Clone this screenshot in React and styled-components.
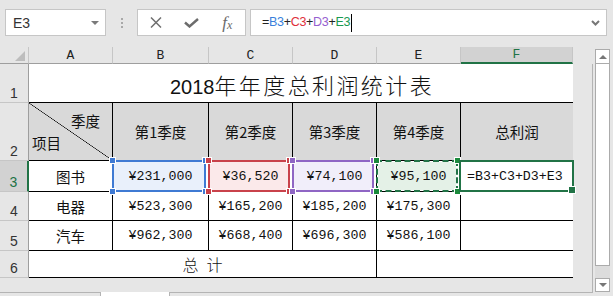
import React from "react";
import styled, { createGlobalStyle, css } from "styled-components";

const GlobalStyle = createGlobalStyle`
  html, body {
    margin: 0;
    padding: 0;
    background: #e6e6e6;
    overflow: hidden;
  }
`;

const CJK = `"Noto Sans CJK SC", "Liberation Sans", sans-serif`;
const MONO = `"Liberation Mono", "Noto Sans CJK SC", monospace`;
const GREEN = "#217346";

const Window = styled.div`
  width: 613px;
  height: 296px;
  background: #e6e6e6;
  display: flex;
  flex-direction: column;
  overflow: hidden;
`;

const FormulaBar = styled.div`
  height: 47px;
  box-sizing: border-box;
  padding: 9px 6px 11px 5px;
  display: flex;
  align-items: stretch;
`;

const NameBox = styled.div`
  width: 101px;
  box-sizing: border-box;
  background: #fff;
  border: 1px solid #c6c6c6;
  display: flex;
  align-items: center;
  justify-content: space-between;
  padding: 0 6px 0 7px;
  font-family: "Liberation Sans", sans-serif;
  font-size: 14px;
  color: #333;
`;

const DropTriangle = styled.span`
  width: 0;
  height: 0;
  border-left: 4px solid transparent;
  border-right: 4px solid transparent;
  border-top: 4px solid #7a7a7a;
`;

const Dots = styled.div`
  width: 31px;
  display: flex;
  flex-direction: column;
  align-items: center;
  justify-content: center;
  gap: 2px;
  span {
    width: 2px;
    height: 2px;
    background: #a8a8a8;
  }
`;

const ButtonGroup = styled.div`
  width: 109px;
  box-sizing: border-box;
  background: #fff;
  border: 1px solid #c6c6c6;
  display: flex;
  align-items: center;
`;

const BarButton = styled.div`
  width: 36px;
  display: flex;
  align-items: center;
  justify-content: center;
  color: #6e6e6e;
`;

const Fx = styled.span`
  font-family: "Liberation Serif", serif;
  font-style: italic;
  font-size: 17px;
  color: #6a6a6a;
  sub {
    font-size: 12px;
    vertical-align: -1px;
  }
`;

const FormulaInput = styled.div`
  flex: 1;
  margin-left: 4px;
  box-sizing: border-box;
  background: #fff;
  border: 1px solid #c6c6c6;
  display: flex;
  align-items: center;
  justify-content: space-between;
  padding: 0 6px 0 11px;
  font-family: "Liberation Sans", sans-serif;
  font-size: 12.5px;
  letter-spacing: -0.3px;
  color: #222;
`;

const Ref = styled.span`
  color: ${(p) => p.$color};
`;

const Caret = styled.span`
  display: inline-block;
  width: 1px;
  height: 18px;
  background: #000;
  vertical-align: middle;
  margin-left: 1px;
`;

const Body = styled.div`
  flex: 1;
  display: flex;
`;

const SheetPane = styled.div`
  width: 593px;
  display: flex;
  flex-direction: column;
`;

const SheetRow = styled.div`
  display: flex;
  height: 231px;
`;

const Gutter = styled.div`
  flex: 1;
  margin-top: 17px;
  border-right: 1px solid #b4b4b4;
`;

const BelowGrid = styled.div`
  height: 14px;
  border-right: 1px solid #b4b4b4;
`;

const TabStrip = styled.div`
  flex: 1;
  border-top: 1px solid #b4b4b4;
  display: flex;
`;

const SheetTab = styled.div`
  margin-left: 100px;
  margin-top: -1px;
  width: 68px;
  background: #fff;
  border-left: 1px solid #b4b4b4;
  border-right: 1px solid #b4b4b4;
`;

const Grid = styled.div`
  width: 573px;
  display: grid;
  grid-template-columns: 29px 84px 96px 84px 84px 84px 112px;
  grid-template-rows: 17px 39px 58px 31px 29px 30px 27px;
`;

const Corner = styled.div`
  box-sizing: border-box;
  background: #e6e6e6;
  border-right: 1px solid #c6c6c6;
  border-bottom: 1px solid #9e9e9e;
  display: flex;
  align-items: flex-end;
  justify-content: flex-end;
  padding: 0 3px 2px 0;
  &::after {
    content: "";
    width: 0;
    height: 0;
    border-left: 10px solid transparent;
    border-bottom: 10px solid #bdbdbd;
  }
`;

const ColHeader = styled.div`
  box-sizing: border-box;
  background: ${(p) => (p.$active ? "#d2d2d2" : "#e6e6e6")};
  border-right: 1px solid #c6c6c6;
  border-bottom: ${(p) => (p.$active ? `2px solid ${GREEN}` : "1px solid #9e9e9e")};
  color: ${(p) => (p.$active ? GREEN : "#222")};
  display: flex;
  align-items: center;
  justify-content: center;
  font-family: ${MONO};
  font-size: 13px;
`;

const RowHeader = styled.div`
  box-sizing: border-box;
  background: ${(p) => (p.$active ? "#d2d2d2" : "#e6e6e6")};
  border-bottom: 1px solid #c6c6c6;
  border-right: ${(p) => (p.$active ? `2px solid ${GREEN}` : "1px solid #9e9e9e")};
  color: ${(p) => (p.$active ? GREEN : "#333")};
  display: flex;
  align-items: flex-end;
  justify-content: center;
  padding-bottom: 1px;
  font-family: "Liberation Sans", sans-serif;
  font-size: 14px;
  line-height: 16px;
`;

const Cell = styled.div`
  box-sizing: border-box;
  position: relative;
  grid-column: span ${(p) => p.$span || 1};
  background: ${(p) => p.$bg || "#fff"};
  border-right: ${(p) => (p.$noRight ? "none" : "1px solid #000")};
  border-bottom: 1px solid #000;
  display: flex;
  align-items: center;
  justify-content: ${(p) => p.$align || "center"};
  font-family: ${(p) => (p.$mono ? MONO : CJK)};
  font-size: ${(p) => (p.$mono ? "13.3px" : "14.5px")};
  color: #111;
`;

const TitleText = styled.div`
  font-family: ${CJK};
  font-size: 22px;
  font-weight: 300;
  letter-spacing: 2.4px;
  padding-left: 2px;
  padding-top: 2px;
  color: #111;
`;

const TitleNum = styled.span`
  font-family: "Liberation Sans", sans-serif;
  font-size: 20px;
  font-weight: 400;
  letter-spacing: 0;
`;

const TotalText = styled.div`
  font-family: ${CJK};
  font-size: 16px;
  font-weight: 300;
  letter-spacing: 8px;
  padding-left: 8px;
  color: #111;
`;

const Diagonal = styled.div`
  box-sizing: border-box;
  background: linear-gradient(
    to top right,
    transparent calc(50% - 0.6px),
    #000 50%,
    transparent calc(50% + 0.6px)
  ),
  #d9d9d9;
  border-right: 1px solid #000;
  border-bottom: 1px solid #000;
  display: flex;
  flex-direction: column;
  justify-content: space-between;
  padding: 7px 12px 7px 3px;
  font-family: ${CJK};
  font-size: 14.5px;
  color: #111;
  span:first-child {
    align-self: flex-end;
  }
`;

const RefBox = styled.div`
  position: absolute;
  top: -1px;
  left: -1px;
  right: 2px;
  bottom: -1px;
  z-index: 1;
  box-sizing: border-box;
  border: 2px ${(p) => (p.$dashed ? "dashed" : "solid")} ${(p) => p.$color};
  background: ${(p) => p.$tint};
  background-clip: padding-box;
  display: flex;
  align-items: center;
  justify-content: center;
  padding-left: 3px;
`;

const Handle = styled.span`
  position: absolute;
  width: 7px;
  height: 7px;
  box-sizing: border-box;
  background: ${(p) => p.$color};
  border: 1px solid #fff;
  ${(p) => (p.$top ? css`top: -5px;` : css`bottom: -5px;`)}
  ${(p) => (p.$left ? css`left: -5px;` : css`right: -5px;`)}
`;

const ActiveBox = styled.div`
  position: absolute;
  top: -1px;
  left: -2px;
  right: -1px;
  bottom: -1px;
  z-index: 2;
  border: 2px solid ${GREEN};
  pointer-events: none;
`;

const FillHandle = styled.span`
  position: absolute;
  right: -4px;
  bottom: -4px;
  width: 6px;
  height: 6px;
  background: ${GREEN};
  border: 1px solid #fff;
`;

const ScrollBar = styled.div`
  width: 15px;
  margin: 2px 0 0 2px;
  display: flex;
  flex-direction: column;
`;

const ArrowBox = styled.div`
  height: ${(p) => p.$h}px;
  box-sizing: border-box;
  background: #fff;
  border: 1px solid #ababab;
  display: flex;
  align-items: center;
  justify-content: center;
  &::after {
    content: "";
    width: 0;
    height: 0;
    border-left: 4px solid transparent;
    border-right: 4px solid transparent;
    ${(p) =>
      p.$down
        ? css`border-top: 4px solid #777;`
        : css`border-bottom: 4px solid #777;`}
  }
`;

const Thumb = styled.div`
  height: 202px;
  box-sizing: border-box;
  background: #fff;
  border: 1px solid #ababab;
  border-top: none;
`;

const Track = styled.div`
  height: 12px;
  background: #dcdcdc;
`;

const refs = [
  { color: "#3f7ad3", tint: "#e9f0fb" },
  { color: "#c9424b", tint: "#fbe9ea" },
  { color: "#8f66c4", tint: "#f1eefa" },
  { color: GREEN, tint: "#e4f1e7", dashed: true, handle: "#1b8a3c" },
];

const rows = [
  { n: 4, name: "电器", values: ["¥523,300", "¥165,200", "¥185,200", "¥175,300"] },
  { n: 5, name: "汽车", values: ["¥962,300", "¥668,400", "¥696,300", "¥586,100"] },
];

const book = ["¥231,000", "¥36,520", "¥74,100", "¥95,100"];

function RefCell({ value, ref: r }) {
  return (
    <Cell $mono>
      <RefBox $color={r.color} $tint={r.tint} $dashed={r.dashed}>
        {value}
        <Handle $top $left $color={r.handle || r.color} />
        <Handle $top $color={r.handle || r.color} />
        <Handle $left $color={r.handle || r.color} />
        <Handle $color={r.handle || r.color} />
      </RefBox>
    </Cell>
  );
}

export default function App() {
  return (
    <Window>
      <GlobalStyle />
      <FormulaBar>
        <NameBox>
          E3
          <DropTriangle />
        </NameBox>
        <Dots>
          <span />
          <span />
          <span />
        </Dots>
        <ButtonGroup>
          <BarButton>
            <svg width="12" height="11" viewBox="0 0 12 11">
              <path d="M1 0.5 L11 10.5 M11 0.5 L1 10.5" stroke="#707070" strokeWidth="1.5" fill="none" />
            </svg>
          </BarButton>
          <BarButton>
            <svg width="15" height="10" viewBox="0 0 15 10">
              <path d="M1 4.5 L5.5 8.5 L14 1" stroke="#6c6c6c" strokeWidth="2.4" fill="none" />
            </svg>
          </BarButton>
          <BarButton>
            <Fx>
              f<sub>x</sub>
            </Fx>
          </BarButton>
        </ButtonGroup>
        <FormulaInput>
          <span>
            =<Ref $color="#3a7fdb">B3</Ref>+<Ref $color="#e0303a">C3</Ref>+
            <Ref $color="#9660d0">D3</Ref>+<Ref $color="#1a9950">E3</Ref>
            <Caret />
          </span>
          <svg width="9" height="6" viewBox="0 0 9 6">
            <path d="M1 1 L4.5 4.5 L8 1" stroke="#777" strokeWidth="2" fill="none" />
          </svg>
        </FormulaInput>
      </FormulaBar>

      <Body>
        <SheetPane>
          <SheetRow>
            <Grid>
              <Corner />
              {["A", "B", "C", "D", "E", "F"].map((c) => (
                <ColHeader key={c} $active={c === "F"}>
                  {c}
                </ColHeader>
              ))}

              <RowHeader>1</RowHeader>
              <Cell $span={6} $noRight>
                <TitleText>
                  <TitleNum>2018</TitleNum>年年度总利润统计表
                </TitleText>
              </Cell>

              <RowHeader>2</RowHeader>
              <Diagonal>
                <span>季度</span>
                <span>项目</span>
              </Diagonal>
              {["第1季度", "第2季度", "第3季度", "第4季度"].map((q) => (
                <Cell key={q} $bg="#d9d9d9">
                  {q}
                </Cell>
              ))}
              <Cell $bg="#d9d9d9" $noRight>
                总利润
              </Cell>

              <RowHeader $active>3</RowHeader>
              <Cell>图书</Cell>
              {book.map((v, i) => (
                <RefCell key={v} value={v} ref={refs[i]} />
              ))}
              <Cell $mono $noRight $align="flex-start">
                <span style={{ paddingLeft: 6 }}>=B3+C3+D3+E3</span>
                <ActiveBox>
                  <FillHandle />
                </ActiveBox>
              </Cell>

              {rows.map((r) => (
                <React.Fragment key={r.n}>
                  <RowHeader>{r.n}</RowHeader>
                  <Cell>{r.name}</Cell>
                  {r.values.map((v) => (
                    <Cell key={v} $mono>
                      {v}
                    </Cell>
                  ))}
                  <Cell $noRight />
                </React.Fragment>
              ))}

              <RowHeader>6</RowHeader>
              <Cell $span={4}>
                <TotalText>总计</TotalText>
              </Cell>
              <Cell $span={2} $noRight />
            </Grid>
            <Gutter />
          </SheetRow>
          <BelowGrid />
          <TabStrip>
            <SheetTab />
          </TabStrip>
        </SheetPane>
        <ScrollBar>
          <ArrowBox $h={15} />
          <Thumb />
          <Track />
          <ArrowBox $h={14} $down />
        </ScrollBar>
      </Body>
    </Window>
  );
}
